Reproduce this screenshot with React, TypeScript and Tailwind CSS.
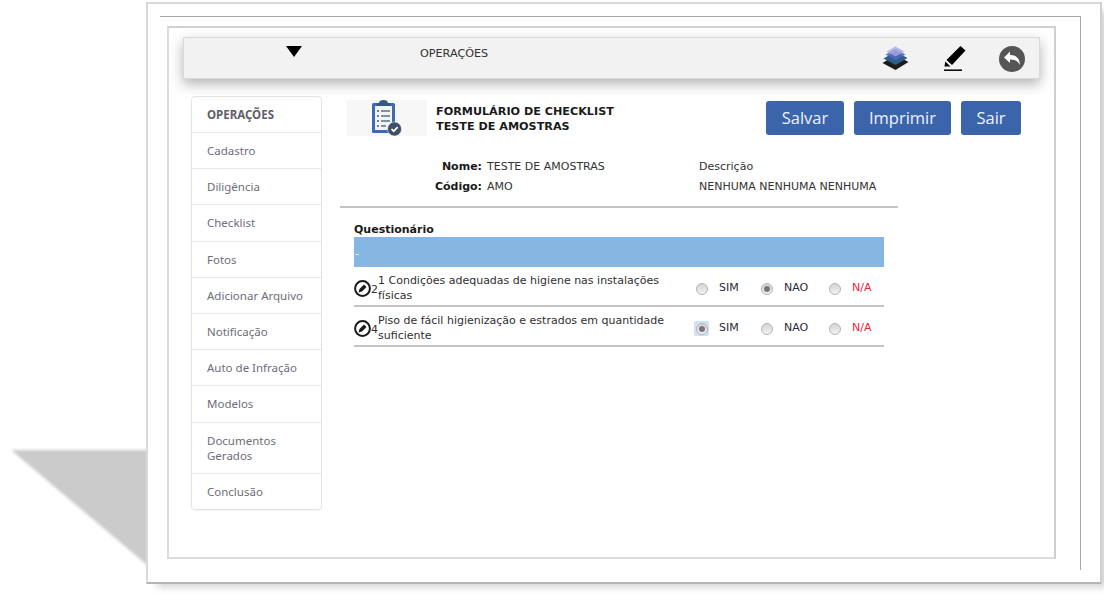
const menu = ["Cadastro", "Diligência", "Checklist", "Fotos", "Adicionar Arquivo", "Notificação", "Auto de Infração", "Modelos", "Documentos Gerados", "Conclusão"];

function Radio({ checked, focus }: { checked?: boolean; focus?: boolean }) {
  return (
    <span className={focus ? "flex h-[15px] w-[15px] items-center justify-center bg-[#cfe0f7] rounded-[2px]" : "flex h-[15px] w-[15px] items-center justify-center"}>
      <span className="flex h-[12px] w-[12px] items-center justify-center rounded-full border border-[#b4b4b4] bg-gradient-to-b from-[#d4d4d4] to-[#f2f2f2]">
        {checked && <span className="h-[6px] w-[6px] rounded-full bg-[#777]" />}
      </span>
    </span>
  );
}

function Option({ label, checked, focus, red, w }: { label: string; checked?: boolean; focus?: boolean; red?: boolean; w: string }) {
  return (
    <div className={`flex items-center ${w}`}>
      <Radio checked={checked} focus={focus} />
      <span className={red ? "ml-[10px] text-[#f0233f]" : "ml-[10px] text-[#2b2b3a]"}>{label}</span>
    </div>
  );
}

function EditCircle() {
  return (
    <svg width="17" height="17" viewBox="0 0 17 17" className="shrink-0">
      <circle cx="8.500" cy="8.500" r="7.400" fill="#fff" stroke="#1a1a1a" strokeWidth="2" />
      <path d="M4.500 12.500l1-3.500 4.500-4.500 2.500 2.500-4.500 4.500z" fill="#1a1a1a" />
    </svg>
  );
}

function Row({ n, text, opts }: { n: string; text: string; opts: [boolean, boolean, boolean] }) {
  return (
    <div className="flex h-[40px] items-center border-b-2 border-[#c4c4c4] pt-[4px]">
      <div className="flex w-[340px] shrink-0 items-center">
        <EditCircle />
        <span className="w-[7px] pt-[2px] text-[11px] leading-[11px] text-[#333]">{n}</span>
        <span className="w-[310px] leading-[15px] text-[#2f2f2f]">{text}</span>
      </div>
      <div className="flex items-center pt-[1px]">
        <Option label="SIM" checked={opts[0]} focus={opts[0]} w="w-[65px]" />
        <Option label="NAO" checked={opts[1]} w="w-[68px]" />
        <Option label="N/A" checked={opts[2]} red w="w-[50px]" />
      </div>
    </div>
  );
}

export default function App() {
  return (
    <div className="relative h-[594px] w-[1104px] overflow-hidden bg-white font-['DejaVu_Sans','Liberation_Sans',sans-serif] text-[11px]">
      <svg className="absolute left-0 top-0" width="150" height="594">
        <defs><filter id="b"><feGaussianBlur stdDeviation="1.6" /></filter></defs>
        <polygon points="11,450 160,450 160,576" fill="#cbcbcb" filter="url(#b)" />
      </svg>
      <div className="relative ml-[146px] mt-[2px] h-[582px] w-[956px] border-2 border-[#d9d9d9] border-b-[#b5b5b5] border-r-[#cfcfcf] bg-white pl-[12px] pt-[12px] shadow-[8px_6px_8px_-3px_rgba(0,0,0,0.18)]">
        <div className="h-[554px] w-[921px] border-r border-t border-[#a9a9a9] pl-[7px] pt-[9px]">
          <div className="h-[533px] w-[889px] border-2 border-[#dcdcdc] border-t-[#d0d0d0] border-r-[#cfcfcf] px-[14px] pt-[9px]">
            <div className="flex h-[42px] w-[857px] items-start border border-[#d9d9d9] bg-[#f2f2f2] shadow-[0_5px_12px_rgba(0,0,0,0.3)]">
              <svg width="16" height="11" viewBox="0 0 16 11" className="ml-[102px] mt-[8px]"><path d="M0 0h16L8 11z" fill="#000" /></svg>
              <span className="ml-[118px] mt-[8px] text-[11.2px] text-[#333]">OPERAÇÕES</span>
              <div className="ml-auto flex items-center pr-[14px] pt-[8px]">
                <svg width="27" height="26" viewBox="0 0 27 26">
                  <path d="M13.500 9l13 7-13 8-13-7z" fill="#1c1c1c" />
                  <path d="M13.500 5.500l12 6.500-12 7-12-6.500z" fill="#2f5f8c" />
                  <path d="M13.500 3l10 5.500-10 6-10-6z" fill="#4f68b9" opacity="0.85" />
                  <path d="M13.500 0.500l9 5-9 5-9-5z" fill="#a9a6e6" opacity="0.8" />
                </svg>
                <svg width="23" height="26" viewBox="0 0 23 26" className="ml-[34px]">
                  <path d="M17.500 0l5 4.500L9 19l-5.500-5z" fill="#000" />
                  <path d="M2.200 15.500l5.300 5H1.500z" fill="#000" />
                  <path d="M1 24.200h18" stroke="#000" strokeWidth="1.500" />
                </svg>
                <svg width="26" height="26" viewBox="0 0 26 26" className="ml-[33px]">
                  <circle cx="13" cy="13" r="13" fill="#555" />
                  <path d="M5 11.500l6-6v3.500c6 0 9.500 3 10 10-2-4-5-5.500-10-5.500V17z" fill="#fff" />
                </svg>
              </div>
            </div>
            <div className="mt-[17px] flex items-start pl-[8px]">
              <div className="w-[131px] shrink-0 rounded-[4px] border border-[#e4e4e4] font-['Noto_Sans','Open_Sans',sans-serif] text-[11.5px] text-[#6d6d78] shadow-[0_1px_1px_rgba(0,0,0,0.05)]">
                <div className="flex h-[36px] items-center border-b border-[#e8e8e8] pl-[15px] font-bold text-[#5f5f6a]">OPERAÇÕES</div>
                {menu.map((m, i) => (
                  <div key={m} className={`border-[#e8e8e8] px-[15px] py-[10.1px] leading-[15px] ${i < menu.length - 1 ? "border-b" : ""}`}>{m}</div>
                ))}
              </div>
              <div className="ml-[18px] flex-1">
                <div className="flex h-[44px] items-start pl-[7px] pt-[4px]">
                  <div className="flex h-[36px] w-[80px] shrink-0 items-center justify-center bg-[#f7f7f7]">
                    <svg width="32" height="38" viewBox="0 0 32 38" className="ml-[-2px]">
                      <rect x="2" y="4" width="23" height="30" rx="1.500" fill="#3d6cae" />
                      <rect x="5" y="7" width="17" height="24" fill="#f4f4f4" />
                      <path d="M9 4c0-2 2-3 4.500-3S18 2 18 4h2v3H7V4z" fill="#34597f" />
                      <path d="M7 12h2M7 17h2M7 22h2M7 27h2" stroke="#34597f" strokeWidth="1.500" />
                      <path d="M11 12h9M11 17h9M11 22h9M11 27h5" stroke="#5c6f86" strokeWidth="1.500" />
                      <circle cx="24.500" cy="30" r="7" fill="#3e5068" stroke="#fff" strokeWidth="0.500" />
                      <path d="M21.500 30l2.200 2.200 4-4" fill="none" stroke="#fff" strokeWidth="1.700" />
                    </svg>
                  </div>
                  <div className="ml-[9px] pt-[4px] text-[11.2px] font-bold leading-[15px] text-[#1a1a1a]">
                    <div>FORMULÁRIO DE CHECKLIST</div>
                    <div>TESTE DE AMOSTRAS</div>
                  </div>
                  <div className="ml-auto flex gap-[10px] pr-[19px] pt-[1px] font-['Open_Sans',sans-serif] text-[16.500px] text-[#eef3fb]">
                    <button className="h-[34px] w-[78px] rounded-[3px] bg-[#3c64ab]">Salvar</button>
                    <button className="h-[34px] w-[97px] rounded-[3px] bg-[#3c64ab]">Imprimir</button>
                    <button className="h-[34px] w-[60px] rounded-[3px] bg-[#3c64ab]">Sair</button>
                  </div>
                </div>
                <div className="w-[558px] border-b-2 border-[#c4c4c4] pb-[9px] pt-[17px] leading-[20px] text-[#333]">
                  <div className="flex">
                    <span className="w-[147px] pr-[5px] text-right font-bold text-[#1a1a1a]">Nome:</span>
                    <span className="w-[212px]">TESTE DE AMOSTRAS</span>
                    <span>Descrição</span>
                  </div>
                  <div className="flex">
                    <span className="w-[147px] pr-[5px] text-right font-bold text-[#1a1a1a]">Código:</span>
                    <span className="w-[212px]">AMO</span>
                    <span>NENHUMA NENHUMA NENHUMA</span>
                  </div>
                </div>
                <div className="ml-[14px] w-[530px]">
                  <div className="mt-[15px] font-bold leading-[14px] text-[#1a1a1a]">Questionário</div>
                  <div className="flex h-[30px] items-end bg-[#85b7e2] pb-[6px] pl-[1px] leading-[14px] text-white">-</div>
                  <Row n="2" text="1 Condições adequadas de higiene nas instalações físicas" opts={[false, true, false]} />
                  <Row n="4" text="Piso de fácil higienização e estrados em quantidade suficiente" opts={[true, false, false]} />
                </div>
              </div>
            </div>
          </div>
        </div>
      </div>
    </div>
  );
}
